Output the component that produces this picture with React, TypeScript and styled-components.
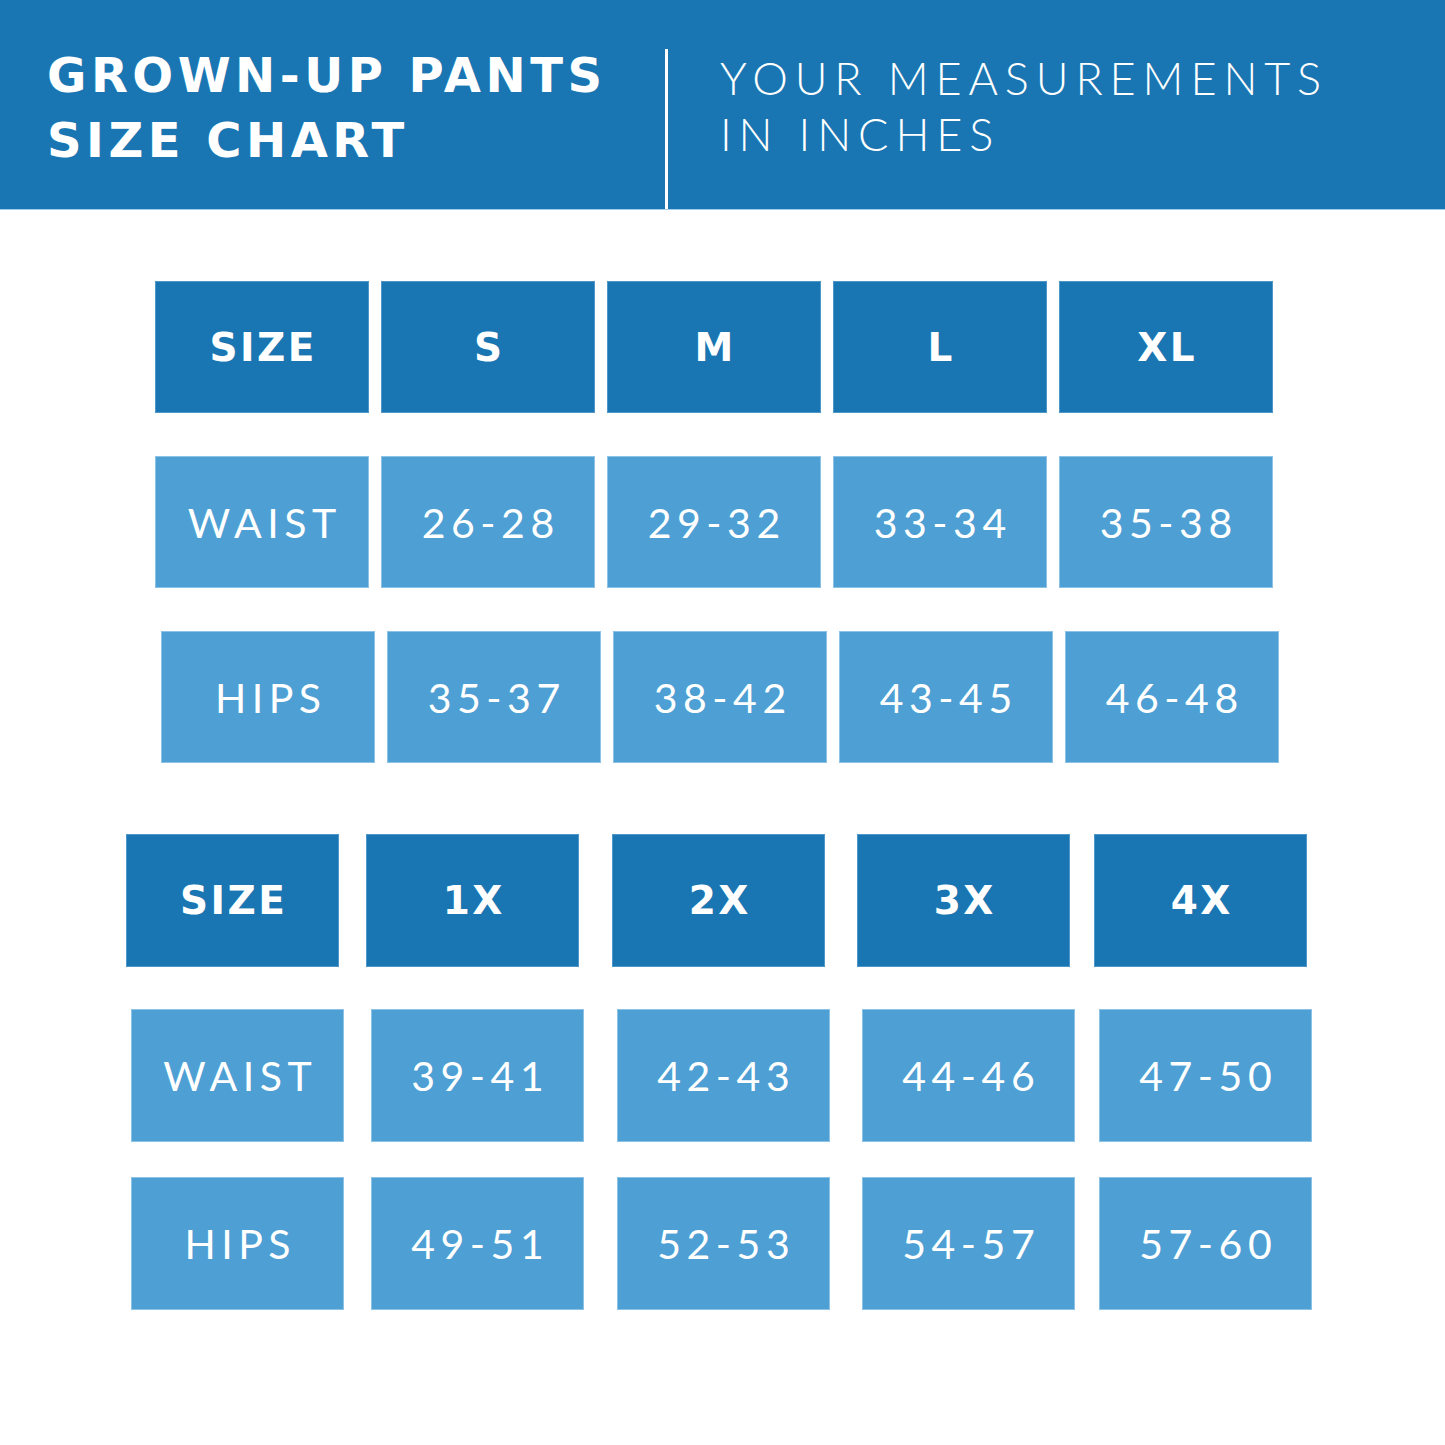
import React from 'react';
import styled, { createGlobalStyle } from 'styled-components';

const Global = createGlobalStyle`
  html, body { margin: 0; padding: 0; background: #ffffff; }
  body { width: 1445px; min-height: 1445px; }
`;

const DARK = '#1a76b2';
const LIGHT = '#4d9fd4';

const Page = styled.div`
  width: 1445px;
  height: 1445px;
  background: #ffffff;
  overflow: hidden;
`;

const Header = styled.header`
  display: flex;
  height: 209px;
  background: ${DARK};
  border-bottom: 1px solid #a3cdec;
`;

const TitleBlock = styled.div`
  width: 618px;
  padding: 43px 0 0 47px;
`;

const Title = styled.h1`
  margin: 0;
  font-family: 'DejaVu Sans', sans-serif;
  font-weight: 700;
  font-size: 48px;
  line-height: 65px;
  letter-spacing: 4.5px;
  color: #ffffff;
  white-space: nowrap;
`;

const Divider = styled.div`
  width: 3px;
  margin-top: 49px;
  align-self: stretch;
  background: #ffffff;
`;

const SubBlock = styled.div`
  padding: 50px 0 0 52px;
`;

const Subtitle = styled.p`
  margin: 0;
  font-family: Lato, sans-serif;
  font-weight: 300;
  font-size: 45px;
  line-height: 56px;
  letter-spacing: 6.9px;
  color: #ffffff;
  white-space: nowrap;
`;

const Main = styled.main`
  display: flex;
  flex-direction: column;
`;

const Table = styled.section<{ $mt: number }>`
  display: flex;
  flex-direction: column;
  margin-top: ${(p) => p.$mt}px;
`;

const Row = styled.div<{ $offset: number; $mt: number }>`
  display: flex;
  margin-left: ${(p) => p.$offset}px;
  margin-top: ${(p) => p.$mt}px;
`;

const Cell = styled.div<{ $kind: 'head' | 'value'; $w: number; $h: number; $gap: number }>`
  box-sizing: border-box;
  display: flex;
  align-items: center;
  justify-content: center;
  flex: none;
  width: ${(p) => p.$w}px;
  height: ${(p) => p.$h}px;
  margin-left: ${(p) => p.$gap}px;
  background: ${(p) => (p.$kind === 'head' ? DARK : LIGHT)};
  border: 1px solid ${(p) => (p.$kind === 'head' ? '#4f97c9' : '#8cc2e6')};
  color: #ffffff;
  white-space: nowrap;
  font-family: ${(p) => (p.$kind === 'head' ? "'DejaVu Sans', sans-serif" : 'Lato, sans-serif')};
  font-weight: ${(p) => (p.$kind === 'head' ? 700 : 400)};
  font-size: ${(p) => (p.$kind === 'head' ? 39 : 41)}px;
  letter-spacing: ${(p) => (p.$kind === 'head' ? 2.5 : 5.5)}px;
  padding-left: ${(p) => (p.$kind === 'head' ? 2.5 : 5.5)}px;
`;

type RowData = { kind: 'head' | 'value'; offset: number; mt: number; cells: string[] };
type TableData = { mt: number; w: number; h: number; gaps: number[]; rows: RowData[] };

const tables: TableData[] = [
  {
    mt: 71,
    w: 214,
    h: 132,
    gaps: [0, 12, 12, 12, 12],
    rows: [
      { kind: 'head', offset: 155, mt: 0, cells: ['SIZE', 'S', 'M', 'L', 'XL'] },
      { kind: 'value', offset: 155, mt: 43, cells: ['WAIST', '26-28', '29-32', '33-34', '35-38'] },
      { kind: 'value', offset: 161, mt: 43, cells: ['HIPS', '35-37', '38-42', '43-45', '46-48'] },
    ],
  },
  {
    mt: 71,
    w: 213,
    h: 133,
    gaps: [0, 27, 33, 32, 24],
    rows: [
      { kind: 'head', offset: 126, mt: 0, cells: ['SIZE', '1X', '2X', '3X', '4X'] },
      { kind: 'value', offset: 131, mt: 42, cells: ['WAIST', '39-41', '42-43', '44-46', '47-50'] },
      { kind: 'value', offset: 131, mt: 35, cells: ['HIPS', '49-51', '52-53', '54-57', '57-60'] },
    ],
  },
];

export default function App() {
  return (
    <Page>
      <Global />
      <Header>
        <TitleBlock>
          <Title>
            GROWN-UP PANTS
            <br />
            SIZE CHART
          </Title>
        </TitleBlock>
        <Divider />
        <SubBlock>
          <Subtitle>
            YOUR MEASUREMENTS
            <br />
            IN INCHES
          </Subtitle>
        </SubBlock>
      </Header>
      <Main>
        {tables.map((t, ti) => (
          <Table key={ti} $mt={t.mt}>
            {t.rows.map((r, ri) => (
              <Row key={ri} $offset={r.offset} $mt={r.mt}>
                {r.cells.map((c, ci) => (
                  <Cell key={ci} $kind={r.kind} $w={t.w} $h={t.h} $gap={t.gaps[ci]}>
                    {c}
                  </Cell>
                ))}
              </Row>
            ))}
          </Table>
        ))}
      </Main>
    </Page>
  );
}
